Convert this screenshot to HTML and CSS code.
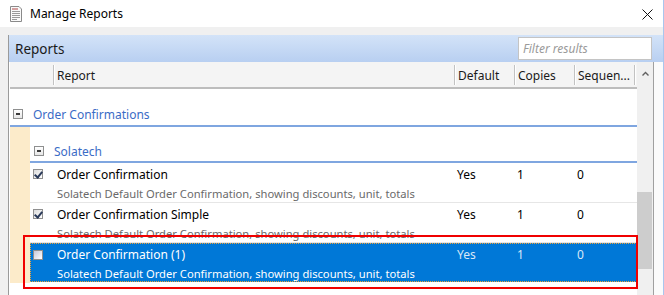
FILE: index.html
```html
<!DOCTYPE html>
<html>
<head>
<meta name="viewport" content="width=device-width, initial-scale=1">
<link rel="stylesheet" href="styles.css">
</head>
<body>

<div class="window">
  <div class="titlebar">
    <svg class="app-icon" width="14" height="16" viewBox="0 0 14 16">
      <path d="M1.5 0.5 H10 L12.5 3 V15.5 H1.5 Z" fill="#fafafa" stroke="#8a8a8a"/>
      <rect x="3" y="2.5" width="6" height="1" fill="#b04848"/>
      <rect x="3" y="5" width="8" height="1" fill="#9a9a9a"/>
      <rect x="3" y="7" width="8" height="1" fill="#9a9a9a"/>
      <rect x="3" y="9" width="8" height="1" fill="#9a9a9a"/>
      <rect x="3" y="11" width="8" height="1" fill="#9a9a9a"/>
      <rect x="3" y="13" width="5" height="1" fill="#9a9a9a"/>
    </svg>
    <span class="title">Manage Reports</span>
    <svg class="close" width="11" height="11" viewBox="0 0 11 11">
      <path d="M0.5 0.5 L10.5 10.5 M10.5 0.5 L0.5 10.5" stroke="#111" stroke-width="1"/>
    </svg>
  </div>

  <div class="client">
    <div class="panel">
      <div class="panel-head">
        <span class="panel-title">Reports</span>
        <input class="filter" type="text" placeholder="Filter results">
      </div>

      <div class="grid-wrap">
        <div class="grid">
          <div class="col-head">
            <div class="hcell hcell-blank"></div>
            <div class="hcell">Report</div>
            <div class="hcell">Default</div>
            <div class="hcell">Copies</div>
            <div class="hcell">Sequen...</div>
          </div>

          <div class="rows">
            <div class="group-row">
              <span class="minus"></span>
              <span class="group-name">Order Confirmations</span>
            </div>
            <div class="group-body">
              <div class="indent"></div>
              <div class="group-inner">
                <div class="sub-row">
                  <span class="minus"></span>
                  <span class="group-name">Solatech</span>
                </div>

                <div class="item">
                  <div class="item-line">
                    <span class="check checked"></span>
                    <span class="item-name">Order Confirmation</span>
                    <span class="val val-default">Yes</span>
                    <span class="val val-copies">1</span>
                    <span class="val val-seq">0</span>
                  </div>
                  <div class="item-desc">Solatech Default Order Confirmation, showing discounts, unit, totals</div>
                </div>

                <div class="item">
                  <div class="item-line">
                    <span class="check checked"></span>
                    <span class="item-name">Order Confirmation Simple</span>
                    <span class="val val-default">Yes</span>
                    <span class="val val-copies">1</span>
                    <span class="val val-seq">0</span>
                  </div>
                  <div class="item-desc">Solatech Default Order Confirmation, showing discounts, unit, totals</div>
                </div>

                <div class="item selected">
                  <div class="item-line">
                    <span class="check"></span>
                    <span class="item-name">Order Confirmation (1)</span>
                    <span class="val val-default">Yes</span>
                    <span class="val val-copies">1</span>
                    <span class="val val-seq">0</span>
                  </div>
                  <div class="item-desc">Solatech Default Order Confirmation, showing discounts, unit, totals</div>
                </div>
              </div>
            </div>
          </div>
        </div>

        <div class="vscroll">
          <svg class="arrow-up" width="7" height="5" viewBox="0 0 7 5">
            <path d="M0.5 4.5 L3.5 1.5 L6.5 4.5" fill="none" stroke="#606060" stroke-width="1.4"/>
          </svg>
          <div class="thumb"></div>
        </div>
        <div class="right-edge"></div>
      </div>
    </div>
  </div>

  <!-- annotation drawn over the selected row -->
  <div class="highlight"></div>
</div>

</body>
</html>
```

FILE: styles.css
```css
* {
  box-sizing: border-box;
}

body {
  margin: 0;
  font-family: "Noto Sans", "Open Sans", sans-serif;
  font-size: 12px;
  color: #000;
  background: #f0f0f0;
}

.window {
  position: relative;
  width: 664px;
  height: 295px;
  overflow: hidden;
  border-right: 1px solid #a9c6ee;
}

.titlebar {
  height: 27px;
  background: #fff;
  display: flex;
  align-items: center;
  padding-left: 9px;
}

.app-icon {
  margin-top: 1px;
}

.title {
  margin-left: 7px;
  font-size: 12px;
}

.close {
  margin-left: auto;
  margin-right: 10px;
  margin-top: 1px;
}

.client {
  padding: 8px 0 0 8px;
  height: 268px;
}

.panel {
  height: 100%;
  border-left: 1px solid #9a9a9a;
  display: flex;
  flex-direction: column;
}

.panel-head {
  height: 27px;
  background: linear-gradient(#d3e3f8, #b8cff1);
  display: flex;
  align-items: center;
  padding: 0 11px 0 6px;
}

.panel-title {
  font-size: 13.5px;
  color: #1a1a1a;
}

.filter {
  margin-left: auto;
  width: 134px;
  height: 23px;
  border: 1px solid #c4c4c4;
  background: #fff;
  font-family: inherit;
  font-size: 12px;
  padding: 0 4px;
  outline: none;
}

.filter::placeholder {
  color: #9a9a9a;
  font-style: italic;
}

.grid-wrap {
  flex: 1;
  display: flex;
  background: #fff;
}

.grid {
  flex: 1;
  padding-left: 1px;
}

.col-head {
  height: 27px;
  display: grid;
  grid-template-columns: 44px 401px 60px 60px 60px;
  background: #f4f4f4;
  border-bottom: 2px solid #bdbdbd;
}

.hcell {
  border-right: 1px solid #c2c2c2;
  box-shadow: 1px 0 0 #fff;
  margin: 3px 0 2px;
  padding-left: 3px;
  display: flex;
  align-items: center;
  white-space: nowrap;
  color: #1a1a1a;
}

.rows {
  padding-top: 12px;
}

.group-row {
  height: 26px;
  display: flex;
  align-items: center;
  padding: 2px 0 0 3px;
  border-bottom: 2px solid #7fa6e0;
}

.minus {
  width: 10px;
  height: 10px;
  border: 1px solid #8e8f8f;
  background: linear-gradient(#ffffff, #e6e6e6);
  position: relative;
  margin-right: 10px;
}

.minus::after {
  content: "";
  position: absolute;
  left: 2px;
  top: 3px;
  width: 4px;
  height: 2px;
  background: #3a3a3a;
}

.group-name {
  color: #3b6cc6;
}

.group-body {
  display: flex;
}

.indent {
  width: 20px;
  background: #fcebca;
  height: 156px;
}

.group-inner {
  flex: 1;
}

.sub-row {
  height: 36px;
  padding: 14px 0 0 4px;
  display: flex;
  align-items: center;
  border-bottom: 2px solid #7fa6e0;
}

.item {
  height: 40px;
  border-bottom: 1px solid #e6e6e6;
}

.item-line {
  height: 20px;
  padding-top: 2px;
  display: flex;
  align-items: center;
}

.check {
  width: 10px;
  height: 10px;
  margin: 0 14px 0 3px;
  border: 1px solid #8f8f8f;
  background: linear-gradient(135deg, #dcdcdc, #ffffff);
  position: relative;
}

.check.checked::after {
  content: "";
  position: absolute;
  left: 2px;
  top: 0px;
  width: 3px;
  height: 6px;
  border: solid #2a3a5a;
  border-width: 0 2px 2px 0;
  transform: rotate(40deg);
}

.item-name {
  width: 400px;
}

.val {
  width: 60px;
}

.val-seq {
  width: 59px;
}

.item-desc {
  height: 19px;
  padding: 2px 0 0 27px;
  display: flex;
  align-items: center;
  color: #6a6a6a;
  font-size: 11.2px;
}

.item.selected {
  height: 39px;
  background: #0078d7;
  border: 1px dotted #f0a33a;
  color: #fff;
}

.item.selected .item-line {
  height: 19px;
  margin-left: -1px;
}

.item.selected .item-desc {
  color: #fff;
  margin-left: -1px;
  height: 18px;
}

.item.selected .val {
  color: #d8e8f8;
}

.item.selected .check {
  background: linear-gradient(135deg, #c8c8d8, #ffffff);
}

.vscroll {
  width: 17px;
  background: #f0f0f0;
  position: relative;
  display: flex;
  flex-direction: column;
  align-items: center;
  padding-top: 9px;
}

.thumb {
  margin-top: 116px;
  width: 15px;
  height: 77px;
  background: #cdcdcd;
  margin-right: 1px;
}

.right-edge {
  width: 10px;
  border-left: 1px solid #a0a0a0;
  background: #fbfbfb;
}

.highlight {
  position: absolute;
  left: 23px;
  top: 235px;
  width: 615px;
  height: 54px;
  border: 2px solid #f00000;
}
```
